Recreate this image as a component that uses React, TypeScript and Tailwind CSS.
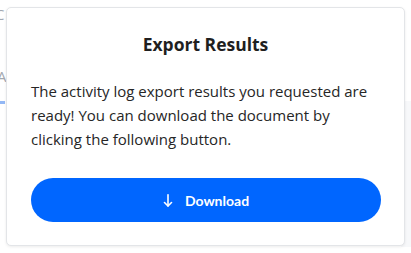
export default function App() {
  return (
    <div className="relative w-[411px] h-[253px] overflow-hidden bg-white" style={{ fontFamily: "'Open Sans', sans-serif" }}>
      {/* page behind the modal */}
      <div className="flex flex-col h-full text-[#a3a8b0] text-[15px] leading-none">
        <div className="h-[22px] flex items-end"><span className="-ml-[5px]">C</span></div>
        <div className="h-[62px] flex items-end"><span className="-ml-[3px]">A</span></div>
        <div className="mt-[17px] flex items-start justify-between">
          <div className="w-[5px] h-[3px] bg-[#93b8f5]" />
          <div className="w-[10px] h-[146px] bg-[#f7f8fa]" />
        </div>
      </div>

      <div className="absolute left-[6px] top-[7px] w-[399px] h-[239px] bg-white rounded-[5px] border border-[#e3e5e8] shadow-[0_1px_3px_rgba(0,0,0,0.08)] flex flex-col px-6 pt-[24px]">
        <h2 className="text-[17.5px] leading-6 font-bold text-[#1f1f1f] text-center">Export Results</h2>
        <p className="mt-[23px] text-[15px] leading-6 text-[#262626] whitespace-nowrap">
          The activity log export results you requested are
          <br />
          ready! You can download the document by
          <br />
          clicking the following button.
        </p>
        <button className="mt-[27px] h-[44px] w-[350px] rounded-full bg-[#0066ff] text-white flex items-center justify-center gap-[12px] text-[14px] font-bold" style={{ fontFamily: "Lato, sans-serif" }}>
          <svg width="10" height="13" viewBox="0 0 10 13" fill="none" stroke="currentColor" strokeWidth="1.6" strokeLinecap="round" strokeLinejoin="round">
            <path d="M5 0.8V12" />
            <path d="M1.5 8.5L5 12L8.5 8.5" />
          </svg>
          <span>Download</span>
        </button>
      </div>
    </div>
  );
}
